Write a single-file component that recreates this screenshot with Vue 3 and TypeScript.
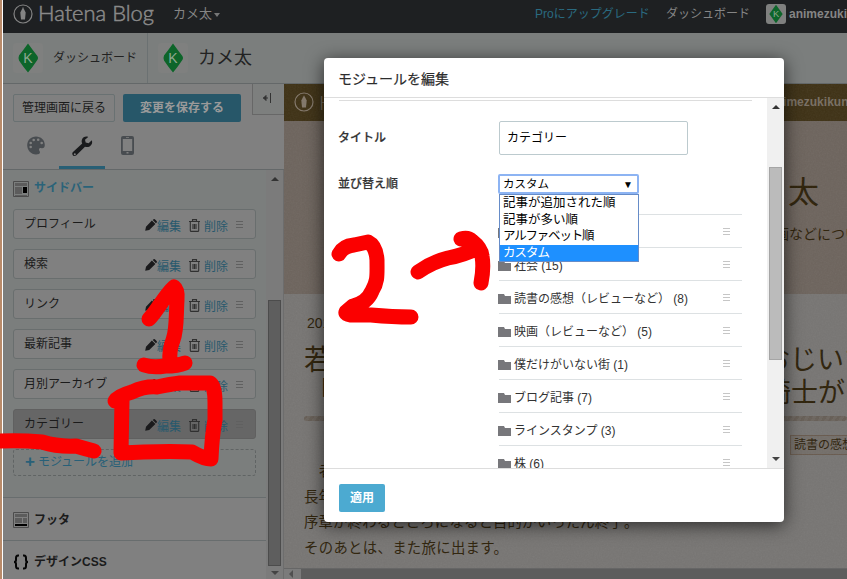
<script setup lang="ts">
interface Category { name: string; count: number }

const modules: string[] = ['プロフィール', '検索', 'リンク', '最新記事', '月別アーカイブ', 'カテゴリー']
const options: string[] = ['記事が追加された順', '記事が多い順', 'アルファベット順', 'カスタム']
const categories: Category[] = [
  { name: '社会', count: 15 },
  { name: '読書の感想（レビューなど）', count: 8 },
  { name: '映画（レビューなど）', count: 5 },
  { name: '僕だけがいない街', count: 1 },
  { name: 'ブログ記事', count: 7 },
  { name: 'ラインスタンプ', count: 3 },
  { name: '株', count: 6 },
]
</script>

<template>
  <div class="screen">
    <div class="edge"></div>
    <div class="page">
      <nav class="topbar">
        <svg class="nib" viewBox="0 0 20 20"><circle cx="10" cy="10" r="9" /><path d="M10 3.2 7.3 8.6 8 15.5h4l.7-6.9zM9.7 3v6h.6V3z" /></svg>
        <svg class="wordmark" viewBox="0 0 118 29"><text x="0" y="17" textLength="116" lengthAdjust="spacingAndGlyphs">Hatena Blog</text></svg>
        <span class="blogname">カメ太</span><i class="caret"></i>
        <div class="account">
          <a class="pro">Proにアップグレード</a>
          <span>ダッシュボード</span>
          <span class="user"><svg class="avatar small" viewBox="0 0 30 30"><path d="M15 1 25 15 15 29 5 15z" /><text x="15" y="20">K</text></svg><b>animezukikun</b></span>
        </div>
      </nav>
      <header class="crumbs">
        <div class="crumb first">
          <svg class="avatar" viewBox="0 0 30 30"><path d="M15 .500q5 7 9 12 2 2.500 0 5-4 6-9 12-5-6-9-12-1-2.500 0-5 4-5 9-12z" /><text x="15" y="20">K</text></svg>
          <span>ダッシュボード</span>
        </div>
        <div class="crumb second">
          <svg class="avatar" viewBox="0 0 30 30"><path d="M15 .500q5 7 9 12 2 2.500 0 5-4 6-9 12-5-6-9-12-1-2.500 0-5 4-5 9-12z" /><text x="15" y="20">K</text></svg>
          <span>カメ太</span>
        </div>
      </header>
      <div class="columns">
        <aside class="sidebar">
          <div class="actions">
            <button class="back">管理画面に戻る</button>
            <button class="save">変更を保存する</button>
            <div class="collapse"><svg viewBox="0 0 10 12"><path d="M8.500 1v10" stroke="#333" fill="none" /><path d="M1 6h5M4 3.500 1.500 6 4 8.500z" stroke="#333" fill="#333" /></svg></div>
          </div>
          <div class="tabs">
            <div class="tab"><svg width="18" height="19" viewBox="0 0 18 19"><path fill="#484c50" fill-rule="evenodd" d="M9 .5C4 .5.2 4.300.2 9.300.2 14.300 4 18.500 9 18.500c2.500 0 4-.8 4-2.200 0-1.200-1.300-1.700-1-3 .2-1 1.300-1.400 2.400-1.100 2 .4 3.400-.8 3.400-3.200C17.800 4 14 .5 9 .5zM5 11a1.300 1.300 0 1 1-2.600 0A1.300 1.300 0 0 1 5 11zm0-4a1.300 1.300 0 1 1-2.600 0A1.300 1.300 0 0 1 5 7zm3-3a1.300 1.300 0 1 1-2.600 0A1.300 1.300 0 0 1 8 4zm4.500-.3a1.300 1.300 0 1 1-2.600 0 1.300 1.300 0 0 1 2.600 0zM16 7a1.300 1.300 0 1 1-2.600 0A1.300 1.300 0 0 1 16 7z" /></svg></div>
            <div class="tab active"><svg width="21" height="21" viewBox="0 0 21 21"><path fill="#191a1c" fill-rule="evenodd" d="M19.800 4.300 16.600 7.200 13.700 6.500 13 3.800 16.200.9C13.500 0 10.800 1.200 9.900 3.800 9.500 5 9.600 6.300 10.200 7.400L1 16c-1 1-1 2.400 0 3.400s2.400.9 3.400-.1L13 10.700c1.200.5 2.700.6 4.100 0 2.600-1 3.700-3.800 2.700-6.400zM3.800 18.200a1 1 0 1 1-2 0 1 1 0 0 1 2 0z" /></svg></div>
            <div class="tab phone"><svg width="13" height="19" viewBox="0 0 13 19"><path fill="#484c50" fill-rule="evenodd" d="M2 0h9q2 0 2 2v15q0 2-2 2H2q-2 0-2-2V2Q0 0 2 0zM1.800 3v12h9.400V3zM5.500 16v1.500h2V16zM5 1.200v.7h3v-.7z" /></svg></div>
          </div>
          <div class="scrollarea">
            <div class="panel">
              <section class="group open">
                <h3 class="heading"><svg width="16" height="16" viewBox="0 0 16 16"><path d="M.5.500h15v15H.5z" fill="none" stroke="#4c4c4c" /><path d="M2 2h12v3H2zM2 6h7v7H2zM2 14h12v1H2z" fill="#5c5c5c" /><path d="M10 6h4v6h-4z" fill="#000" /></svg>サイドバー</h3>
                <ul class="modules">
                  <li v-for="(m, i) in modules" :key="m" :class="{ current: i === 5 }">
                    <span class="mname">{{ m }}</span>
                    <svg class="pencil" viewBox="0 0 12 12"><path d="M.2 11.800 1 7.800 6.900 1.600l3.500 3.500L4.200 11zM7.700 1l.9-.8q.7-.5 1.500.2l1.500 1.500q.7.800.1 1.500l-.8.900z" fill="#1a1a1c" /></svg>
                    <a class="edit">編集</a>
                    <svg class="trash" viewBox="0 0 11 13"><path d="M0 2.500h11M3.500 2V.6h4V2M1.300 3v8.400q0 1 1 1h6.400q1 0 1-1V3M4 5v5M5.500 5v5M7 5v5" /></svg>
                    <a class="remove">削除</a><i class="grip"></i>
                  </li>
                </ul>
                <div class="add"><b>+</b><span>モジュールを追加</span></div>
              </section>
              <section class="group footer"><h3 class="heading"><svg width="16" height="16" viewBox="0 0 16 16"><path d="M.5.500h15v15H.5z" fill="none" stroke="#4c4c4c" /><path d="M2 2h12v3H2zM2 6h7v5H2zM10 6h4v5h-4z" fill="#5c5c5c" /><path d="M2 12h12v2H2z" fill="#000" /></svg>フッタ</h3></section>
              <section class="group css"><h3 class="heading"><svg width="16" height="16" viewBox="0 0 16 16"><path d="M6 1.500H5Q3 1.500 3 4v2q0 2-2 2 2 0 2 2v2q0 2.500 2 2.500h1M10 1.500h1q2 0 2 2.500v2q0 2 2 2-2 0-2 2v2q0 2.500-2 2.500h-1" fill="none" stroke="#050505" stroke-width="2" /></svg>デザインCSS</h3></section>
            </div>
            <div class="vbar"><i class="arrow up"></i><div class="thumb"></div><i class="arrow down"></i></div>
          </div>
        </aside>
        <main class="preview">
          <div class="blogbar">
            <svg class="nib" viewBox="0 0 20 20"><circle cx="10" cy="10" r="9" /><path d="M10 3.200 7.300 8.600 8 15.500h4l.7-6.900z" /></svg><span class="h">H</span><b>animezukikun</b>
          </div>
          <div class="hero"><h1>太</h1><p>画などについて</p></div>
          <article>
            <time>2015</time>
            <div class="headline"><span>若</span><span>おじいち</span></div>
            <div class="headline two"><span>「</span><span>騎士がお</span></div>
            <div class="rule"></div>
            <div class="tag">読書の感想</div>
            <p class="intro">者</p>
            <p>長年</p>
            <p class="long">序章が終わるところになると目的がいったん終了。</p>
            <p class="last">そのあとは、また旅に出ます。</p>
          </article>
          <div class="hbar"><i></i><div></div></div>
          <svg class="grain" width="563" height="484"><filter id="grain"><feTurbulence type="fractalNoise" baseFrequency=".65" numOctaves="2" seed="4" /><feColorMatrix type="saturate" values="0" /></filter><rect width="563" height="484" filter="url(#grain)" /></svg>
        </main>
      </div>
    </div>

    <div class="modal">
      <h2>モジュールを編集</h2>
      <div class="mbody">
        <div class="form">
          <div class="topline"></div>
          <div class="field one"><label>タイトル</label><div class="input">カテゴリー</div></div>
          <div class="field"><label>並び替え順</label>
            <div class="select"><span>カスタム</span><i>▼</i>
              <ul class="dropdown"><li v-for="(o, i) in options" :key="o" :class="{ chosen: i === 3 }">{{ o }}</li></ul>
            </div>
          </div>
          <ul class="cats">
            <li><svg width="13" height="10" viewBox="0 0 13 10"><path d="M0 0h6l1 2h6v8H0z" fill="#77777b" /></svg><span></span><i class="grip"></i></li>
            <li v-for="c in categories" :key="c.name"><svg width="13" height="10" viewBox="0 0 13 10"><path d="M0 0h6l1 2h6v8H0z" fill="#77777b" /></svg><span>{{ c.name }} ({{ c.count }})</span><i class="grip"></i></li>
          </ul>
        </div>
        <div class="mbar"><i class="arrow up"></i><div class="thumb"></div><i class="arrow down"></i></div>
      </div>
      <footer><button>適用</button></footer>
    </div>

    <svg class="marks" width="847" height="579" viewBox="0 0 847 579">
      <g fill="none" stroke="#fb0000" stroke-width="15" stroke-linecap="round" stroke-linejoin="round">
        <path d="M149 319C157 311 165 295 174 287Q178 290 177 300C176 315 177 330 173 340Q169 350 170 362M144 365Q153 368 165 366Q178 366 185 363" />
        <path d="M115 401Q118 396 132 392Q145 386 157 387Q171 384 180 383H210Q215 386 215 402V420Q212 435 211 459Q204 459 192 452Q172 451 144 452L121 453 122 400" />
        <path d="M0 441Q20 440 42 442Q58 447 76 446Q86 449 94 451" />
        <path d="M339 254Q343 246 354 245L368 242Q376 246 377 260C377 275 378 281 372 291Q367 303 353 306L346 312Q345 314 351 315H371Q393 317 411 317" />
        <path d="M418 272Q432 262 448 258Q464 255 478 248M461 239Q468 237 472 241Q481 248 482 256Q484 268 481 283" />
      </g>
    </svg>
  </div>
</template>

<style>
body { margin: 0; overflow: hidden; }
</style>

<style scoped>
* { box-sizing: border-box; }
.screen { position: relative; width: 847px; height: 579px; overflow: hidden; display: flex; font: 12px/1 "Liberation Sans", "Noto Sans CJK JP", sans-serif; color: #1b1b1b; white-space: nowrap; }
h1, h2, h3, p, ul { margin: 0; padding: 0; font-weight: normal; list-style: none; }
i { font-style: normal; }
.edge { width: 3px; flex: none; background: #b98b6a; border-right: 1px solid #fff; }
.page { width: 844px; flex: none; height: 579px; background: #808080; display: flex; flex-direction: column; }
.topbar { height: 33px; flex: none; background: #1e2022; display: flex; align-items: flex-start; padding: 4px 0 0 10px; color: #858585; }
.nib { width: 20px; height: 20px; fill: #848484; flex: none; }
.nib circle { fill: none; stroke: #848484; stroke-width: 1.2; }
.wordmark { width: 118px; height: 29px; margin-left: 5px; overflow: visible; }
.wordmark text { font: 300 21px Lato, sans-serif; fill: #898989; stroke: #898989; stroke-width: .5; }
.blogname { font-size: 13px; margin: 3px 0 0 17px; }
.caret { border: 3px solid transparent; border-top: 4px solid #777; border-bottom: 0; margin: 9px 0 0 2px; }
.account { display: flex; margin-left: auto; width: 312px; flex: none; padding-top: 4px; }
.account > * { flex: none; }
.pro { color: #2a6a80; width: 131px; }
.account > span:nth-child(2) { width: 100px; }
.user { display: flex; margin-top: -4px; }
.user b { margin: 4px 0 0 3px; }
.avatar { width: 30px; height: 30px; fill: #0d652a; background: #7f807f; border-radius: 3px; flex: none; }
.avatar text { font: 14px "Liberation Sans", sans-serif; fill: #8da891; text-anchor: middle; }
.avatar.small { width: 20px; height: 20px; }
.crumbs { height: 51px; flex: none; display: flex; background: #7b7e7d; border-bottom: 1px solid #646869; }
.crumb { display: flex; align-items: center; height: 50px; padding-left: 10px; color: #222; }
.first { width: 145px; border-right: 1px solid #6b7172; }
.first span { margin: -1px 0 0 10px; }
.second span { font-size: 18px; margin: -1px 0 0 10px; }
.columns { display: flex; flex: 1; min-height: 0; }
.sidebar { width: 281px; flex: none; display: flex; flex-direction: column; }
.actions { height: 37px; display: flex; padding: 10px 0 0 10px; flex: none; }
.actions button { height: 28px; border-radius: 2px; font: 12px/26px "Liberation Sans", "Noto Sans CJK JP", sans-serif; padding: 0; }
.back { width: 102px; background: #808080; border: 1px solid #697172; color: #1b1b1b; }
.save { width: 118px; margin-left: 8px; background: #275769; border: 0; color: #9a9a9a; font-weight: bold !important; }
.collapse { width: 32px; height: 31px; margin: -10px 0 0 11px; border: 1px solid #676767; border-top: 0; display: flex; flex: none; background: #7d7f7e; border-right: 0; padding: 8px 0 0 9px; }
.collapse svg { width: 10px; height: 12px; }
.tabs { height: 49px; flex: none; display: flex; padding-left: 10px; border-bottom: 1px solid #646869; }
.tab { width: 46px; height: 48px; display: flex; justify-content: center; padding-top: 15px; }
.phone { width: 44px; }
.active { border-bottom: 3px solid #285f75; }
.scrollarea { flex: 1; min-height: 0; display: flex; }
.panel { width: 263px; background: #7b7e7d; }
.group { border-bottom: 1px solid #686d6e; }
.open { height: 328px; padding: 10px 10px 0; }
.heading { font-size: 13px; font-weight: bold; display: flex; align-items: center; height: 16px; gap: 5px; }
.open .heading { color: #2a6379; margin-bottom: 13px; font-size: 12px; }
.open .heading svg { margin-top: 2px; }
.modules { display: flex; flex-direction: column; gap: 10px; }
.modules li { height: 30px; border: 1px solid #696e6e; border-radius: 3px; background: #808080; display: flex; padding-left: 10px; }
.modules .current { background: #666; border-color: #606060; }
.mname { width: 121px; padding-top: 8px; }
.pencil { width: 12px; height: 12px; margin-top: 9px; }
.edit, .remove { color: #28596d; padding-top: 11px; }
.trash { width: 11px; height: 13px; margin: 9px 4px 0 8px; fill: none; stroke: #303030; stroke-width: 1.1; overflow: visible; }
.grip { width: 7px; height: 8px; background: linear-gradient(#606060 1px, transparent 1px, transparent 3px, #606060 3px, #606060 4px, transparent 4px, transparent 6px, #606060 6px, #606060 7px, transparent 7px); margin: 11px 0 0 8px; }
.add { height: 27px; border: 1px dashed #606464; border-radius: 3px; margin-top: 10px; padding: 5px 0 0 11px; color: #286078; display: flex; }
.add b { font-size: 17px; line-height: 14px; margin-right: 3px; }
.add span { padding-top: 1px; }
.footer { height: 43px; background: #808080; padding: 14px 0 0 10px; }
.css { height: 42px; background: #808080; padding: 13px 0 0 10px; border: 0; }
.footer .heading, .css .heading { font-size: 12px; }
.vbar { width: 18px; background: #7b7b7b; border-right: 1px solid #6d6d6d; display: flex; flex-direction: column; align-items: center; }
.arrow { border: 4px solid transparent; width: 0; height: 0; }
.up { border-bottom-color: #333; border-top: 0; }
.down { border-top-color: #444; border-bottom: 0; }
.vbar .up { margin-top: 7px; }
.vbar .thumb { width: 13px; height: 266px; margin-top: 119px; background: #5e5e5e; border: 1px solid #4c4c4c; }
.vbar .down { margin-top: 5px; }
.preview { position: relative; width: 563px; flex: none; background: #777573; color: #2d2109; overflow: hidden; display: flex; flex-direction: column; }
.grain { position: absolute; left: 0; top: 0; opacity: .07; }
.blogbar { height: 37px; flex: none; background: #3e3115; display: flex; padding: 8px 0 0 10px; color: #786e62; }
.blogbar .nib { fill: #82776a; }
.blogbar .nib circle { stroke: #82776a; }
.h { font: 300 20px/20px Lato, sans-serif; margin-left: 5px; }
.blogbar b { margin: 4px 0 0 435px; }
.hero { height: 173px; flex: none; background: #6d645d; }
.hero h1 { font-size: 31px; padding: 56px 0 0 504px; line-height: 31px; }
.hero p { font-size: 14px; margin: 19px 0 0 491px; }
article { height: 274px; flex: none; padding: 22px 0 0 20px; font-size: 14.400px; }
time { display: block; font-size: 14px; margin-left: 3px; height: 31px; }
.headline { display: flex; font-size: 27px; height: 33px; }
.headline span { flex: none; }
.headline span:first-child { width: 459px; font-size: 28px; }
.headline.two span:first-child { text-indent: 1px; }
.headline.two span:last-child { margin-left: 1px; }
.rule { height: 5px; margin-top: 3px; border-radius: 3px; background: repeating-linear-gradient(120deg, #665e56 0 3px, #6c655e 3px 6px); }
.tag { width: 100px; height: 20px; border: 1px solid #685a4e; background: #736e69; font-size: 12px; padding: 3px; margin: 14px 0 0 486px; }
article p { height: 25.500px; }
article .intro { padding-left: 15px; margin-top: 9px; }
article .long { letter-spacing: .15px; }
article .last { letter-spacing: .3px; }
.hbar { height: 12px; display: flex; border-top: 1px solid #666; background: #7b7b7b; }
.hbar i { border: 4px solid transparent; border-right-color: #505050; border-left: 0; margin: 1px 8px 0 5px; height: 0; }
.hbar div { flex: 1; background: #5d5d5d; }
.modal { position: absolute; left: 324px; top: 58px; width: 460px; height: 464px; background: #fff; border-radius: 4px; box-shadow: 0 3px 18px rgba(0, 0, 0, .65); display: flex; flex-direction: column; color: #333; overflow: hidden; }
.modal h2 { height: 40px; flex: none; border-bottom: 1px solid #ddd; font-size: 14px; font-weight: 400; padding: 14px 14px 0; color: #2c2c2c; -webkit-text-stroke: .2px #2c2c2c; }
.mbody { height: 370px; flex: none; display: flex; overflow: hidden; }
.form { width: 443px; padding-left: 15px; }
.topline { height: 3px; width: 413px; border-bottom: 1px solid #ddd; }
.field { display: flex; align-items: center; }
.field label { width: 160px; font-weight: 500; text-indent: -1px; -webkit-text-stroke: .2px #333; }
.one { padding: 20px 0 19px; }
.input { width: 189px; height: 34px; border: 1px solid #bccace; border-radius: 2px; padding: 10px 7px; color: #000; }
.select { position: relative; width: 141px; height: 20px; margin-left: -1px; border: 2px solid #8db4f3; border-radius: 2px; padding: 3px 3px 1px; color: #000; display: flex; justify-content: space-between; align-items: center; font-size: 11.500px; }
.select i { font-size: 10px; padding-right: 1px; }
.dropdown { position: absolute; z-index: 2; left: -1px; top: 18px; width: 140px; height: 68px; background: #fff; border: 1px solid #668cc8; font-size: 12.500px; }
.dropdown li { height: 17px; padding: 2px 3px; }
.dropdown li:nth-child(3) { padding-top: 1px; height: 16px; letter-spacing: -1.200px; }
.dropdown li:nth-child(4) { height: 16px; padding-top: 2px; letter-spacing: -1px; }
.chosen { background: #1e90ff; color: #fff; }
.cats { width: 243px; margin: 20px 0 0 160px; }
.cats li { height: 33px; border-top: 1px solid #dde1e3; display: flex; padding-top: 12px; }
.cats svg { margin: 1px 3px 0 -1px; flex: none; }
.cats span { flex: 1; }
.cats .grip { width: 7px; margin: 1px 12px 0 0; background: linear-gradient(#c6c6c6 1px, transparent 1px, transparent 3px, #c6c6c6 3px, #c6c6c6 4px, transparent 4px, transparent 6px, #c6c6c6 6px, #c6c6c6 7px, transparent 7px); }
.mbar { width: 17px; background: #f0f0f0; display: flex; flex-direction: column; align-items: center; }
.mbar .up { margin-top: 7px; }
.mbar .thumb { width: 13px; height: 193px; margin-top: 58px; background: #bbb; border: 1px solid #a5a5a5; }
.mbar .down { margin-top: 97px; }
.modal footer { flex: 1; border-top: 1px solid #ddd; padding: 15px; }
.modal footer button { display: block; width: 46px; height: 28px; border: 0; border-radius: 2px; background: #4caad1; color: #fff; font: bold 12px/26px "Liberation Sans", "Noto Sans CJK JP", sans-serif; padding: 0; }
.marks { position: absolute; left: 0; top: 0; z-index: 5; }
</style>
